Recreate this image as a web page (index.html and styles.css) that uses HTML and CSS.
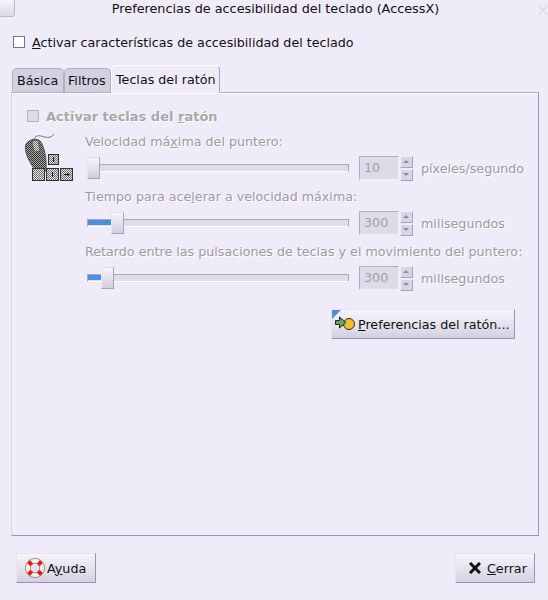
FILE: index.html
```html
<!DOCTYPE html>
<html lang="es">
<head>
  <meta charset="UTF-8">
  <title>Preferencias de accesibilidad del teclado (AccessX)</title>
  <link rel="stylesheet" href="styles.css">
</head>
<body>
  <svg class="defs" width="0" height="0">
    <defs>
      <pattern id="dither" width="2" height="2" patternUnits="userSpaceOnUse">
        <rect width="2" height="2" fill="#a8a8a8"/>
        <rect width="1" height="1" fill="#303030"/>
        <rect x="1" y="1" width="1" height="1" fill="#303030"/>
      </pattern>
      <pattern id="dither-light" width="2" height="2" patternUnits="userSpaceOnUse">
        <rect width="2" height="2" fill="#e4e4e4"/>
        <rect width="1" height="1" fill="#707070"/>
        <rect x="1" y="1" width="1" height="1" fill="#707070"/>
      </pattern>
    </defs>
  </svg>

  <div class="window">
    <div class="titlebar">
      <span class="win-icon"></span>
      <span class="win-title">Preferencias de accesibilidad del teclado (AccessX)</span>
      <svg class="win-close" width="10" height="12" viewBox="0 0 10 12"><path d="M0 1l10 10M10 1L0 11" stroke="#e2deec" stroke-width="2" fill="none"/></svg>
    </div>

    <label class="main-check">
      <span class="check"></span>
      <span><u>A</u>ctivar características de accesibilidad del teclado</span>
    </label>

    <div class="tabs">
      <div class="tab">Básica</div>
      <div class="tab tab-second">Filtros</div>
      <div class="tab active">Teclas del ratón</div>
    </div>

    <div class="panel">
      <div class="panel-check">
        <span class="check disabled"></span>
        <span>Activar teclas del <u>r</u>atón</span>
      </div>

      <div class="panel-body">
        <svg class="mouse-icon" width="50" height="50" viewBox="0 0 50 50">
          <path d="M11 6C13 1 18 3 22 4s7 0 9-3" stroke="#777" stroke-width="1" fill="none"/>
          <path d="M3 11c3-5 11-6 14-3 4 4 7 19 6 28-1 4-3 6-5 5-4-1-8-6-11-12C4 24 1 16 3 11z" fill="url(#dither)" stroke="#555"/>
          <path d="M9 9c2-2 5-2 6 0l2 8c-2 2-5 2-6 0z" fill="url(#dither-light)" stroke="#555" stroke-width=".7"/>
          <rect x="25.500" y="21.500" width="10" height="10" fill="url(#dither-light)" stroke="#333"/>
          <rect x="9.500" y="35.500" width="12" height="12" fill="url(#dither-light)" stroke="#333"/>
          <rect x="23.500" y="35.500" width="12" height="12" fill="url(#dither-light)" stroke="#333"/>
          <rect x="37.500" y="35.500" width="12" height="12" fill="url(#dither-light)" stroke="#333"/>
          <path d="M30.500 24v5M29.500 39v5M41 41.500h5M44.500 40l1.500 1.500-1.500 1.500" stroke="#111" stroke-width="1" fill="none"/>
        </svg>

        <div class="settings">
          <div class="setting">
            <div class="setting-label">Velocidad má<u>x</u>ima del puntero:</div>
            <div class="setting-row">
              <div class="slider">
                <div class="thumb" style="left: -1px"></div>
              </div>
              <div class="spin">
                <div class="spin-entry">10</div>
                <div class="spin-btns"><span class="up"></span><span class="down"></span></div>
              </div>
              <span class="unit">píxeles/segundo</span>
            </div>
          </div>

          <div class="setting">
            <div class="setting-label">Tiempo para ace<u>l</u>erar a velocidad máxima:</div>
            <div class="setting-row">
              <div class="slider">
                <div class="fill" style="width: 24px"></div>
                <div class="thumb" style="left: 23px"></div>
              </div>
              <div class="spin">
                <div class="spin-entry">300</div>
                <div class="spin-btns"><span class="up"></span><span class="down"></span></div>
              </div>
              <span class="unit">milisegundos</span>
            </div>
          </div>

          <div class="setting">
            <div class="setting-label">Retardo entre las pulsaciones de teclas y el movimiento del puntero:</div>
            <div class="setting-row">
              <div class="slider">
                <div class="fill" style="width: 14px"></div>
                <div class="thumb" style="left: 13px"></div>
              </div>
              <div class="spin">
                <div class="spin-entry">300</div>
                <div class="spin-btns"><span class="up"></span><span class="down"></span></div>
              </div>
              <span class="unit">milisegundos</span>
            </div>
          </div>
        </div>
      </div>

      <div class="panel-action">
        <button class="btn btn-prefs">
          <span class="focus-corner"></span>
          <svg width="22" height="16" viewBox="0 0 22 16">
            <circle cx="15" cy="8" r="5.500" fill="#f0c030" stroke="#3a2a10"/>
            <path d="M1.500 4.500h4V1l6.500 5.500L5.500 12V8.500h-4z" fill="#6fa060" stroke="#1c2a1c"/>
          </svg>
          <span><u>P</u>referencias del ratón...</span>
        </button>
      </div>
    </div>

    <div class="actions">
      <button class="btn btn-help">
        <svg width="20" height="20" viewBox="0 0 20 20">
          <circle cx="10" cy="10" r="7.200" fill="none" stroke="#f6f2f0" stroke-width="5"/>
          <path d="M3.500 3.500L6.800 6.800M16.500 3.500L13.200 6.800M3.500 16.500L6.800 13.200M16.500 16.500L13.200 13.200" stroke="#e81818" stroke-width="4"/>
          <circle cx="10" cy="10" r="9.600" fill="none" stroke="#a86a50" stroke-width=".8"/>
          <circle cx="10" cy="10" r="4.700" fill="none" stroke="#a86a50" stroke-width=".8"/>
        </svg>
        <span>A<u>y</u>uda</span>
      </button>
      <button class="btn btn-close">
        <svg width="12" height="12" viewBox="0 0 12 12"><path d="M1 1l10 10M11 1L1 11" stroke="#111" stroke-width="3" fill="none"/></svg>
        <span><u>C</u>errar</span>
      </button>
    </div>
  </div>
</body>
</html>
```

FILE: styles.css
```css
html, body {
  margin: 0;
  padding: 0;
}

body {
  width: 548px;
  height: 600px;
  overflow: hidden;
  background-color: #efebf8;
  font-family: "DejaVu Sans", sans-serif;
  font-size: 12.7px;
  color: #111;
}

.defs {
  display: block;
  height: 0;
}

.window {
  display: flex;
  flex-direction: column;
  height: 600px;
}

.titlebar {
  display: flex;
  justify-content: center;
  height: 18px;
  line-height: 17px;
  padding-left: 3px;
  position: relative;
}

.win-title {
  font-size: 12.8px;
}

.win-icon {
  position: absolute;
  left: -1px;
  top: -2px;
  width: 14px;
  height: 17px;
  background: linear-gradient(#f8f6fc, #dcd8e6);
  border: 1px solid #bdb8ca;
  border-radius: 0 0 3px 0;
}

.win-close {
  position: absolute;
  right: 0;
  top: 4px;
}

.main-check {
  display: flex;
  align-items: center;
  gap: 7px;
  margin: 16px 0 0 13px;
  height: 16px;
}

.check {
  display: block;
  width: 10px;
  height: 10px;
  background-color: #fff;
  border: 1px solid #77738a;
}

.check.disabled {
  background-color: #dedbe8;
  border-color: #b4b2c2;
}

.tabs {
  display: flex;
  align-items: flex-end;
  margin: 15px 0 0 12px;
  height: 27px;
  position: relative;
  z-index: 1;
}

.tab {
  box-sizing: border-box;
  width: 52px;
  height: 24px;
  line-height: 24px;
  padding: 0 4px;
  background-color: #d3d0e0;
  border: 1px solid #b2afc9;
  border-bottom: none;
  border-radius: 5px 5px 0 0;
  white-space: nowrap;
}

.tab-second {
  width: 47px;
  padding-left: 3px;
}

.tab.active {
  align-self: flex-start;
  width: 109px;
  height: 28px;
  line-height: 27px;
  background-color: #efebf8;
  border: 1px solid;
  border-color: #fff #a3a0bd #efebf8 #fff;
}

.panel {
  box-sizing: border-box;
  margin: 0 9px 0 11px;
  height: 444px;
  border: 1px solid;
  border-color: #b2afc9 #9a97b5 #9a97b5 #d8d6e6;
  box-shadow: inset 0 1px 0 #fff;
  padding: 15px 0 0 15px;
}

.panel-check {
  display: flex;
  align-items: center;
  gap: 7px;
  height: 16px;
  font-weight: bold;
  font-size: 13px;
  color: #a9a8aa;
  text-shadow: 1px 1px 0 #fff;
}

.panel-body {
  display: flex;
  margin-top: 9px;
}

.mouse-icon {
  flex: none;
  width: 50px;
  height: 50px;
  margin-left: -4px;
}

.settings {
  margin-left: 12px;
}

.setting {
  height: 55px;
}

.setting-label {
  height: 18px;
  line-height: 18px;
  color: #9c9ba0;
  text-shadow: 1px 1px 0 #fff;
  white-space: nowrap;
}

.setting-row {
  display: flex;
  align-items: center;
  height: 24px;
  margin-top: 5px;
}

.slider {
  position: relative;
  box-sizing: border-box;
  width: 262px;
  height: 8px;
  margin-left: 2px;
  background-color: #e0dde9;
  border: 1px solid #a9a6c1;
  border-bottom-color: #fff;
}

.fill {
  height: 5px;
  background-color: #4a90dd;
}

.thumb {
  position: absolute;
  top: -8px;
  box-sizing: border-box;
  width: 13px;
  height: 22px;
  background: linear-gradient(#f6f5fa, #d0cedf);
  border: 1px solid #a5a3bf;
  border-top-color: #dedcea;
  border-left-color: #e8e6f0;
}

.spin {
  display: flex;
  margin-left: 10px;
}

.spin-entry {
  box-sizing: border-box;
  width: 40px;
  height: 24px;
  line-height: 22px;
  padding-left: 4px;
  background-color: #dedbe8;
  border: 1px solid #b1aec8;
  border-bottom-color: #efeef6;
  border-right-color: #efeef6;
  color: #a0a0a4;
}

.spin-btns {
  display: flex;
  flex-direction: column;
  gap: 1px;
  margin-left: 1px;
}

.spin-btns span {
  display: block;
  box-sizing: border-box;
  position: relative;
  width: 13px;
  height: 12px;
  background-color: #d8d6e4;
  border: 1px solid #a5a3bf;
  border-top-color: #efeef6;
  border-left-color: #efeef6;
}

.spin-btns span::after {
  content: "";
  position: absolute;
  left: 2px;
  top: 3px;
  border-left: 3px solid transparent;
  border-right: 3px solid transparent;
}

.spin-btns .up::after {
  border-bottom: 3px solid #8d8c98;
}

.spin-btns .down::after {
  border-top: 3px solid #8d8c98;
}

.unit {
  margin-left: 8px;
  color: #9c9ba0;
  text-shadow: 1px 1px 0 #fff;
}

.panel-action {
  display: flex;
  justify-content: flex-end;
  margin: 11px 23px 0 0;
}

.btn {
  display: flex;
  align-items: center;
  box-sizing: border-box;
  position: relative;
  height: 30px;
  padding: 0;
  background: linear-gradient(#f6f5fa, #d3d1e2);
  border: 1px solid;
  border-color: #e6e4ee #9794b6 #9794b6 #e6e4ee;
  font-family: "DejaVu Sans", sans-serif;
  font-size: 12.7px;
  color: #111;
}

.btn-prefs {
  width: 184px;
  gap: 2px;
  padding-left: 2px;
}

.focus-corner {
  position: absolute;
  left: 0;
  top: 0;
  border-top: 9px solid #4a90dd;
  border-right: 9px solid transparent;
}

.actions {
  display: flex;
  justify-content: space-between;
  margin: 17px 13px 0 16px;
}

.btn-help {
  width: 80px;
  gap: 2px;
  padding-left: 8px;
}

.btn-close {
  width: 80px;
  gap: 6px;
  padding-left: 13px;
}
```
